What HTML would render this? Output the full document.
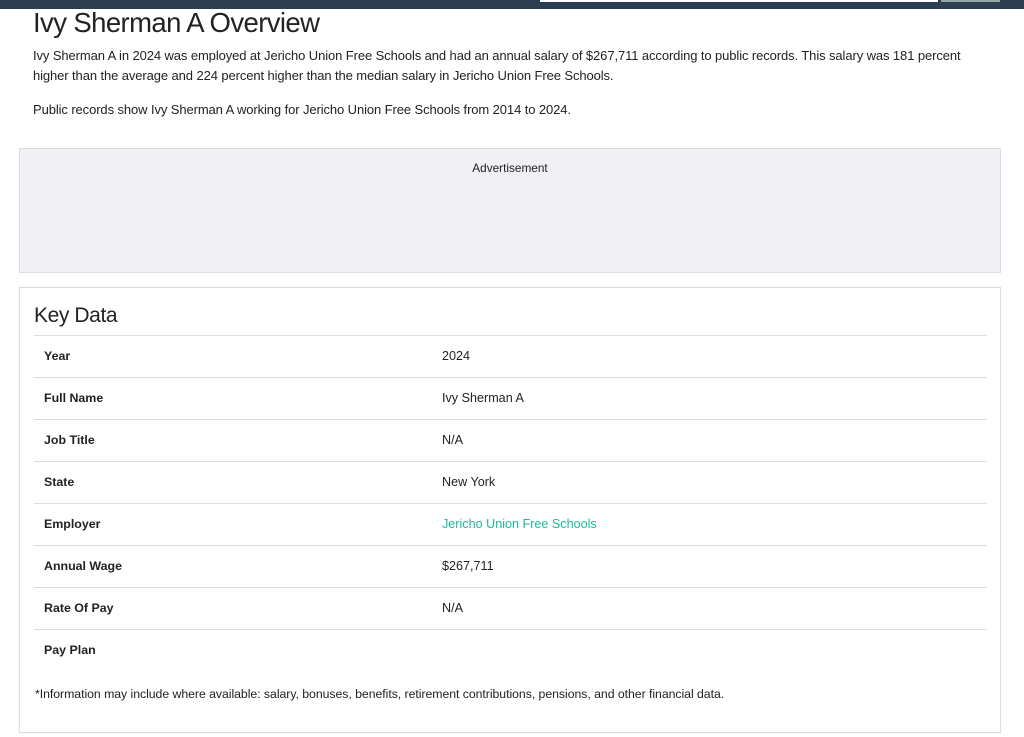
<!DOCTYPE html>
<html><head><style>
body{margin:0;width:1024px;height:737px;overflow:hidden;background:#fff;font-family:"Liberation Sans",sans-serif;color:#222;position:relative}
.top{position:absolute;left:0;top:0;width:1024px;height:9px;background:#2c3e50}
.inp{position:absolute;left:540px;top:0;width:398px;height:2px;background:#fff}
.btn{position:absolute;left:941px;top:0;width:59px;height:2px;background:#95a5a6}
h1{position:absolute;left:33px;top:7px;margin:0;font-weight:normal;font-size:27.5px;letter-spacing:-0.6px;color:#222}
p{position:absolute;left:33px;margin:0;font-size:13px;line-height:20px;letter-spacing:-0.1px;color:#222}
.ad{position:absolute;left:19px;top:148px;width:980px;height:123px;background:#f0f0f5;border:1px solid #ddd}
.ad span{position:absolute;top:12px;width:100%;text-align:center;font-size:11.8px}
.card{position:absolute;left:19px;top:287px;width:980px;height:444px;border:1px solid #ddd;box-shadow:0 0 2px #eee}
.card h2{position:absolute;left:14px;top:16px;margin:0;font-weight:normal;font-size:21px;letter-spacing:-0.4px;color:#222}
.row{position:absolute;left:14px;width:953px;height:41px;border-top:1px solid #ddd;font-size:12.6px}
.row b{position:absolute;left:10px;top:13px;font-weight:bold;font-size:12.4px}
.row i{position:absolute;left:408px;top:13px;font-style:normal}
.note{position:absolute;left:15px;top:399px;font-size:12.3px;letter-spacing:-0.05px;color:#222}
</style></head><body>
<div class="top"></div><div class="inp"></div><div class="btn"></div>
<h1>Ivy Sherman A Overview</h1>
<p style="top:46px">Ivy Sherman A in 2024 was employed at Jericho Union Free Schools and had an annual salary of $267,711 according to public records. This salary was 181 percent<br>higher than the average and 224 percent higher than the median salary in Jericho Union Free Schools.</p>
<p style="top:100px">Public records show Ivy Sherman A working for Jericho Union Free Schools from 2014 to 2024.</p>
<div class="ad"><span>Advertisement</span></div>
<div class="card">
<h2>Key Data</h2>
<div class="row" style="top:47px"><b>Year</b><i>2024</i></div>
<div class="row" style="top:89px"><b>Full Name</b><i>Ivy Sherman A</i></div>
<div class="row" style="top:131px"><b>Job Title</b><i>N/A</i></div>
<div class="row" style="top:173px"><b>State</b><i>New York</i></div>
<div class="row" style="top:215px"><b>Employer</b><i style="color:#18bc9c">Jericho Union Free Schools</i></div>
<div class="row" style="top:257px"><b>Annual Wage</b><i>$267,711</i></div>
<div class="row" style="top:299px"><b>Rate Of Pay</b><i>N/A</i></div>
<div class="row" style="top:341px"><b>Pay Plan</b><i></i></div>
<div class="note">*Information may include where available: salary, bonuses, benefits, retirement contributions, pensions, and other financial data.</div>
</div>
</body></html>
